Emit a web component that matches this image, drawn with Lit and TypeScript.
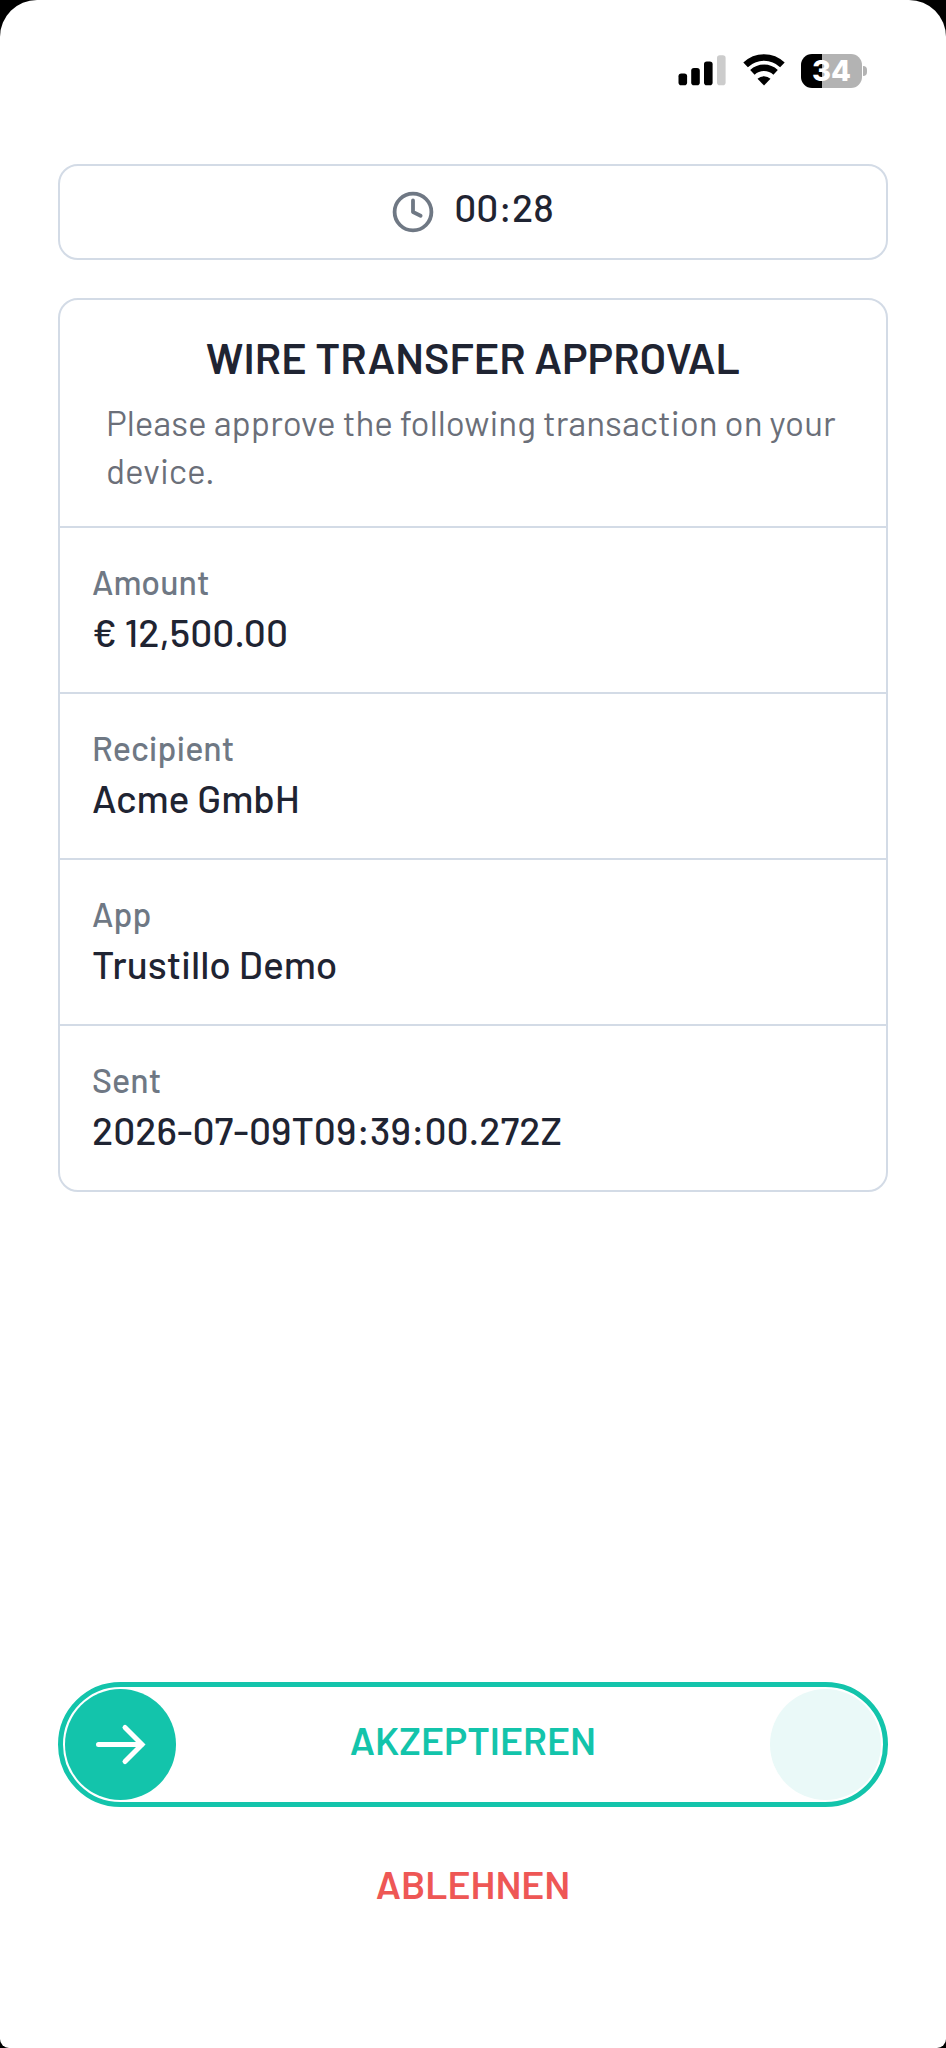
import { LitElement, html, css } from "lit";
import { customElement, property, state } from "lit/decorators.js";

interface Detail {
  label: string;
  value: string;
}

@customElement("status-bar")
export class StatusBar extends LitElement {
  @property({ type: Number }) battery = 34;

  static styles = css`
    :host {
      display: flex;
      justify-content: flex-end;
      align-items: center;
      padding: 54px 79px 0;
    }
    .signal {
      width: 48px;
      height: 34px;
      margin-right: 17px;
    }
    .wifi {
      width: 42px;
      height: 34px;
      margin-right: 16px;
    }
    .battery {
      display: grid;
      place-items: center;
      width: 61px;
      height: 34px;
      border-radius: 11px;
      color: #fff;
      font: 800 29px/34px Inter, sans-serif;
    }
    .nub {
      width: 4px;
      height: 10px;
      margin-left: 1px;
      border-radius: 0 5px 5px 0;
      background: #b3b3b3;
    }
  `;

  render() {
    const fill = `background: linear-gradient(90deg, #000 ${this.battery}%, #b3b3b3 ${this.battery}%)`;
    return html`
      <svg class="signal" viewBox="0 0 48 34" aria-hidden="true">
        <rect x="0.5" y="19.5" width="8.6" height="11.7" rx="2.8" />
        <rect x="13.2" y="14" width="8.6" height="17.2" rx="2.8" />
        <rect x="26" y="7.5" width="8.6" height="23.7" rx="2.8" />
        <rect x="39" y="1.2" width="8.6" height="30" rx="2.8" fill="#cccccc" />
      </svg>
      <svg class="wifi" viewBox="0 0 42 34" fill="none" stroke="#000" aria-hidden="true">
        <path d="M2.6 10.9a26.5 26.5 0 0 1 36.8 0" stroke-width="6.6" />
        <path d="M9.4 18.4a16.8 16.8 0 0 1 23.2 0" stroke-width="6.4" />
        <path d="M21 31.4l-6.5-6.6a9.3 9.3 0 0 1 13 0z" fill="#000" stroke="none" />
      </svg>
      <div class="battery" style=${fill}>${this.battery}</div>
      <div class="nub"></div>
    `;
  }
}

@customElement("slide-confirm")
export class SlideConfirm extends LitElement {
  @property() label = "";
  @state() private progress = 0;

  static styles = css`
    :host {
      display: block;
    }
    .track {
      display: grid;
      align-items: center;
      padding: 2px;
      border: 5px solid #13c4ab;
      border-radius: 63px;
    }
    .track > * {
      grid-area: 1 / 1;
    }
    .target {
      justify-self: end;
      width: 111px;
      height: 111px;
      border-radius: 50%;
      background: #eaf9f8;
    }
    .text {
      justify-self: center;
      padding-bottom: 10px;
      color: #13c4ab;
      font-size: 39px;
      font-weight: 600;
      line-height: 48px;
    }
    .range {
      appearance: none;
      width: 100%;
      height: 111px;
      margin: 0;
      background: transparent;
      cursor: pointer;
    }
    .range::-webkit-slider-thumb {
      appearance: none;
      width: 111px;
      height: 111px;
      border: 0;
      border-radius: 50%;
      background: #13c4ab
        url("data:image/svg+xml,%3Csvg xmlns='http://www.w3.org/2000/svg' viewBox='0 0 111 111' fill='none' stroke='white' stroke-width='5' stroke-linecap='round' stroke-linejoin='miter'%3E%3Cpath d='M33.5 55.5H77M60 38.5l17 17-17 17'/%3E%3C/svg%3E")
        center / 111px 111px no-repeat;
    }
  `;

  private onInput(event: Event) {
    this.progress = Number((event.target as HTMLInputElement).value);
  }

  private onChange() {
    if (this.progress === 100) {
      this.dispatchEvent(new CustomEvent("confirm"));
    } else {
      this.progress = 0;
    }
  }

  render() {
    return html`
      <div class="track">
        <span class="target"></span>
        <label class="text" for="range">${this.label}</label>
        <input
          id="range"
          class="range"
          type="range"
          min="0"
          max="100"
          .value=${String(this.progress)}
          @input=${this.onInput}
          @change=${this.onChange}
        />
      </div>
    `;
  }
}

@customElement("app-root")
export class AppRoot extends LitElement {
  private details: Detail[] = [
    { label: "Amount", value: "€ 12,500.00" },
    { label: "Recipient", value: "Acme GmbH" },
    { label: "App", value: "Trustillo Demo" },
    { label: "Sent", value: "2026-07-09T09:39:00.272Z" },
  ];

  static styles = css`
    :host {
      display: block;
      background: #000;
      font-family: Barlow, Roboto, sans-serif;
      font-weight: 500;
      color: #1f2432;
    }
    .screen {
      box-sizing: border-box;
      display: flex;
      flex-direction: column;
      min-height: 100vh;
      border-radius: 37px 37px 9px 9px;
      background: #fff;
    }
    .content {
      flex: 1;
      display: flex;
      flex-direction: column;
      padding: 76px 58px 140px;
    }
    .timer,
    .card {
      border: 2px solid #d3dbe6;
      border-radius: 20px;
    }
    .timer {
      display: flex;
      align-items: center;
      justify-content: center;
      gap: 20px;
      padding: 17px 0;
      margin-bottom: 38px;
    }
    .clock {
      width: 42px;
      height: 42px;
    }
    .time {
      padding-bottom: 10px;
      font-size: 39px;
      line-height: 48px;
    }
    .head {
      padding: 29px 46px 32px;
    }
    .title {
      margin: 0 0 13px;
      font-size: 43px;
      font-weight: 600;
      line-height: 56px;
      text-align: center;
    }
    .intro {
      margin: 0;
      color: #6b6f79;
      font-size: 35px;
      font-weight: 400;
      line-height: 48px;
    }
    .details {
      margin: 0;
    }
    .row {
      padding: 30px 32px 34px;
      border-top: 2px solid #d3dbe6;
    }
    .label {
      color: #6f7884;
      font-size: 34px;
      line-height: 48px;
    }
    .value {
      margin: 0;
      font-size: 39px;
      line-height: 52px;
    }
    .actions {
      display: flex;
      flex-direction: column;
      gap: 53px;
      margin-top: auto;
    }
    .reject {
      align-self: center;
      padding: 0;
      border: 0;
      background: none;
      color: #ee5755;
      font: inherit;
      font-size: 39px;
      font-weight: 600;
      line-height: 48px;
      cursor: pointer;
    }
  `;

  render() {
    return html`
      <div class="screen">
        <status-bar></status-bar>
        <main class="content">
          <div class="timer">
            <svg class="clock" viewBox="0 0 42 42" fill="none" stroke="#6f7884" stroke-width="3.8" stroke-linecap="round" stroke-linejoin="round" aria-hidden="true">
              <circle cx="21" cy="21" r="18.4" />
              <path d="M21 9.5V21l7.6 3.8" />
            </svg>
            <span class="time">00:28</span>
          </div>
          <section class="card">
            <header class="head">
              <h1 class="title">WIRE TRANSFER APPROVAL</h1>
              <p class="intro">Please approve the following transaction on your device.</p>
            </header>
            <dl class="details">
              ${this.details.map(
                (d) => html`
                  <div class="row">
                    <dt class="label">${d.label}</dt>
                    <dd class="value">${d.value}</dd>
                  </div>
                `
              )}
            </dl>
          </section>
          <div class="actions">
            <slide-confirm label="AKZEPTIEREN"></slide-confirm>
            <button class="reject" type="button">ABLEHNEN</button>
          </div>
        </main>
      </div>
    `;
  }
}
